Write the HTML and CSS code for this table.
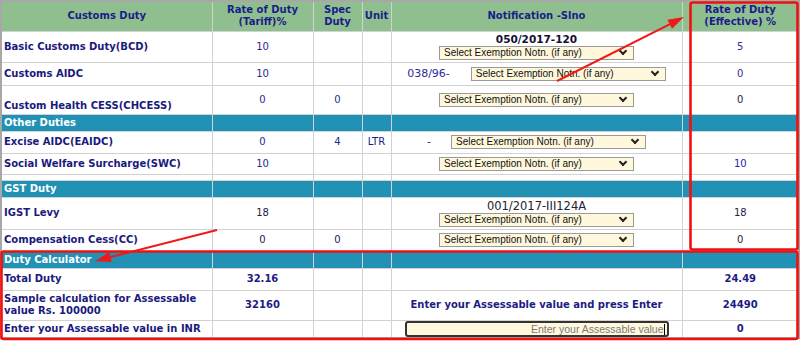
FILE: index.html
```html
<!DOCTYPE html>
<html>
<head>
<meta charset="utf-8">
<link rel="stylesheet" href="styles.css">
</head>
<body>
<div class="wrap">
<table class="duty">
  <colgroup>
    <col class="c1"><col class="c2"><col class="c3"><col class="c4"><col class="c5"><col class="c6">
  </colgroup>
  <tr class="head">
    <th>Customs Duty</th>
    <th>Rate of Duty<br>(Tariff)%</th>
    <th>Spec<br>Duty</th>
    <th>Unit</th>
    <th>Notification -Slno</th>
    <th>Rate of Duty<br>(Effective) %</th>
  </tr>
  <tr class="r-bcd">
    <td class="lbl">Basic Customs Duty(BCD)</td>
    <td class="num">10</td>
    <td></td>
    <td></td>
    <td class="notn"><div class="ncode">050/2017-120</div><span class="sel"><select><option>Select Exemption Notn. (if any)</option></select></span></td>
    <td class="num eff">5</td>
  </tr>
  <tr class="r-aidc">
    <td class="lbl">Customs AIDC</td>
    <td class="num">10</td>
    <td></td>
    <td></td>
    <td class="notn"><span class="pre">038/96-</span><span class="sel"><select><option>Select Exemption Notn. (if any)</option></select></span></td>
    <td class="num eff">0</td>
  </tr>
  <tr class="r-chc">
    <td class="lbl bottom">Custom Health CESS(CHCESS)</td>
    <td class="num">0</td>
    <td class="num">0</td>
    <td></td>
    <td class="notn"><span class="sel"><select><option>Select Exemption Notn. (if any)</option></select></span></td>
    <td class="num dark">0</td>
  </tr>
  <tr class="sect">
    <td>Other Duties</td><td></td><td></td><td></td><td></td><td></td>
  </tr>
  <tr class="r-exc">
    <td class="lbl">Excise AIDC(EAIDC)</td>
    <td class="num">0</td>
    <td class="num">4</td>
    <td class="unit">LTR</td>
    <td class="notn"><span class="pre dash">-</span><span class="sel"><select><option>Select Exemption Notn. (if any)</option></select></span></td>
    <td></td>
  </tr>
  <tr class="r-swc">
    <td class="lbl">Social Welfare Surcharge(SWC)</td>
    <td class="num">10</td>
    <td></td>
    <td></td>
    <td class="notn"><span class="sel"><select><option>Select Exemption Notn. (if any)</option></select></span></td>
    <td class="num blue">10</td>
  </tr>
  <tr class="r-blank">
    <td></td><td></td><td></td><td></td><td></td><td></td>
  </tr>
  <tr class="sect">
    <td>GST Duty</td><td></td><td></td><td></td><td></td><td></td>
  </tr>
  <tr class="r-igst">
    <td class="lbl">IGST Levy</td>
    <td class="num dark">18</td>
    <td></td>
    <td></td>
    <td class="notn"><div class="ncode2">001/2017-III124A</div><span class="sel"><select><option>Select Exemption Notn. (if any)</option></select></span></td>
    <td class="num dark">18</td>
  </tr>
  <tr class="r-cc">
    <td class="lbl">Compensation Cess(CC)</td>
    <td class="num dark">0</td>
    <td class="num dark">0</td>
    <td></td>
    <td class="notn"><span class="sel"><select><option>Select Exemption Notn. (if any)</option></select></span></td>
    <td class="num dark">0</td>
  </tr>
  <tr class="sect">
    <td>Duty Calculator</td><td></td><td></td><td></td><td></td><td></td>
  </tr>
  <tr class="r-total">
    <td class="lbl">Total Duty</td>
    <td class="num bold">32.16</td>
    <td></td>
    <td></td>
    <td></td>
    <td class="num bold">24.49</td>
  </tr>
  <tr class="r-sample">
    <td class="lbl">Sample calculation for Assessable value Rs. 100000</td>
    <td class="num bold">32160</td>
    <td></td>
    <td></td>
    <td class="num bold">Enter your Assessable value and press Enter</td>
    <td class="num bold">24490</td>
  </tr>
  <tr class="r-enter">
    <td class="lbl">Enter your Assessable value in INR</td>
    <td></td>
    <td></td>
    <td></td>
    <td class="notn"><span class="inp"><input type="text" placeholder="Enter your Assessable value"></span></td>
    <td class="num bold">0</td>
  </tr>
</table>
<svg class="annot" width="800" height="341" viewBox="0 0 800 341">
  <rect x="690.5" y="2.5" width="107" height="247" rx="2" fill="none" stroke="#f01010" stroke-width="2.6"/>
  <rect x="1.5" y="251.5" width="796" height="87.5" rx="2" fill="none" stroke="#f01010" stroke-width="2.6"/>
  <line x1="557" y1="81" x2="670" y2="24.2" stroke="#f01818" stroke-width="2"/>
  <polygon points="684,17 672,28.7 667.4,19.7" fill="#f01818"/>
  <line x1="217" y1="230" x2="110.5" y2="257.1" stroke="#f01818" stroke-width="2"/>
  <polygon points="95,261 111.7,261.9 109.3,252.2" fill="#f01818"/>
</svg>
</div>
</body>
</html>
```
FILE: styles.css
```css
html, body {
  margin: 0;
  padding: 0;
  background: #ffffff;
}

body {
  font-family: "DejaVu Sans", Verdana, sans-serif;
  font-size: 10px;
  color: #1a1a80;
}

.wrap {
  position: relative;
  width: 800px;
  height: 341px;
  overflow: hidden;
}

.duty {
  width: 800px;
  border-collapse: collapse;
  table-layout: fixed;
  border: 2px solid #a8a8a8;
}

.c1 { width: 211px; }
.c2 { width: 101px; }
.c3 { width: 49px; }
.c4 { width: 29px; }
.c5 { width: 291px; }
.c6 { width: auto; }

.duty th,
.duty td {
  border: 1px solid #d2d2d2;
  padding: 0 2px;
  vertical-align: middle;
  line-height: 12px;
}

.duty th {
  background: #8fbf8f;
  color: #1c1c8a;
  font-weight: bold;
  text-align: center;
}

.head { height: 30px; }
.r-bcd { height: 31px; }
.r-aidc { height: 23px; }
.r-chc { height: 29px; }
.r-exc { height: 22px; }
.r-swc { height: 21px; }
.r-blank { height: 6px; }
.r-blank td { padding: 0; line-height: 0; }
.r-igst { height: 32px; }
.r-cc { height: 22px; }
.r-total { height: 22px; }
.r-sample { height: 30px; }
.r-enter { height: 18px; }

.sect { height: 17px; }
.sect td {
  background: #2191b5;
  color: #ffffff;
  font-weight: bold;
  padding-top: 0;
  padding-bottom: 0;
  line-height: 12px;
}

.lbl {
  font-weight: bold;
  color: #1a1a7e;
}

.lbl.bottom {
  vertical-align: bottom;
  padding-bottom: 2px;
}

.num {
  text-align: center;
  color: #2a2a8e;
}

.num.dark { color: #222244; }
.num.eff { color: #3a2a90; }
.num.blue { color: #2424b4; }
.num.bold { font-weight: bold; color: #1c1c84; }

.unit {
  text-align: center;
  color: #1a1a80;
}

.notn {
  text-align: center;
  padding: 0;
}

.ncode {
  font-weight: bold;
  font-size: 10.5px;
  color: #111133;
  line-height: 12px;
  margin-bottom: 1px;
}

.ncode2 {
  font-size: 11.5px;
  color: #222233;
  line-height: 13px;
}

.pre {
  font-size: 11px;
  color: #2a2a9a;
  margin-right: 21px;
  vertical-align: middle;
}

.pre.dash {
  margin-right: 20px;
}

.sel {
  position: relative;
  display: inline-block;
  vertical-align: middle;
  width: 195px;
  height: 14px;
}

.sel select {
  appearance: none;
  -webkit-appearance: none;
  display: block;
  width: 195px;
  height: 14px;
  margin: 0;
  padding: 0 0 0 4px;
  box-sizing: border-box;
  border: 1px solid #9a9a9a;
  border-radius: 0;
  background: #fff8dc;
  font-family: "Liberation Sans", Arial, sans-serif;
  font-size: 10px;
  line-height: 12px;
  color: #111111;
}

.sel::after {
  content: "";
  position: absolute;
  right: 8px;
  top: 2px;
  width: 4px;
  height: 4px;
  border-right: 2px solid #222222;
  border-bottom: 2px solid #222222;
  transform: rotate(45deg);
  pointer-events: none;
}

.inp {
  position: relative;
  display: inline-block;
  vertical-align: middle;
  width: 264px;
  height: 16px;
}

.inp input {
  display: block;
  width: 264px;
  height: 16px;
  margin: 0;
  padding: 0 3px 0 4px;
  box-sizing: border-box;
  border: 2px solid #333333;
  border-radius: 3px;
  background: #fff8dc;
  font-family: "Liberation Sans", Arial, sans-serif;
  font-size: 10.5px;
  text-align: right;
  outline: none;
}

.inp input::placeholder {
  color: #7a7a7a;
}

.inp::after {
  content: "";
  position: absolute;
  right: 4px;
  top: 3px;
  width: 1px;
  height: 11px;
  background: #000000;
}

.annot {
  position: absolute;
  left: 0;
  top: 0;
  pointer-events: none;
}
```
